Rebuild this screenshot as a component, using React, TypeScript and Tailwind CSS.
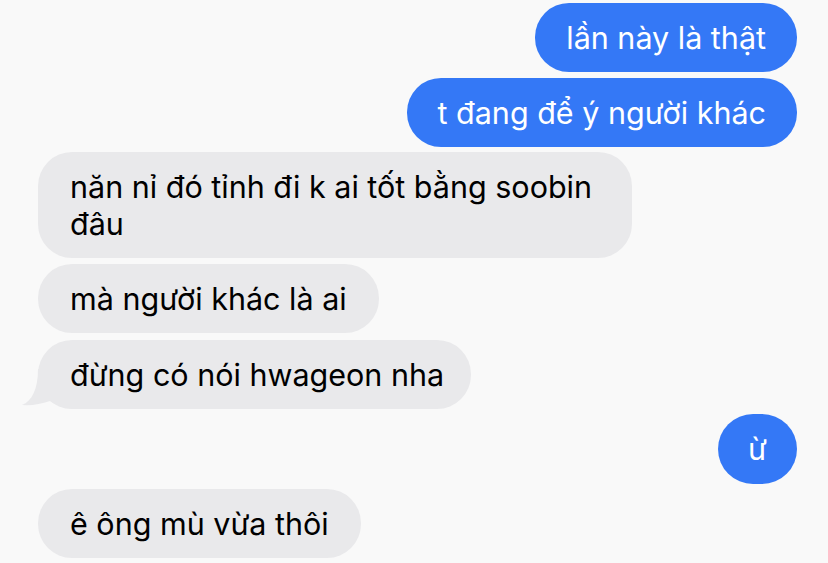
import React from "react";

const Sent = ({ text, className = "" }: { text: string; className?: string }) => (
  <div
    className={`self-end rounded-[34px] bg-[#3478f6] px-[31px] py-4 text-[30.5px] leading-[37px] text-white ${className}`}
  >
    {text}
  </div>
);

const Received = ({
  children,
  tail = false,
  className = "",
  pad = "pr-8",
}: {
  children: React.ReactNode;
  tail?: boolean;
  className?: string;
  pad?: string;
}) => (
  <div
    className={`relative self-start rounded-[34px] bg-[#e9e9eb] pl-8 ${pad} py-4 text-[30.5px] leading-[37px] text-black ${className}`}
  >
    {tail && (
      <svg
        className="absolute bottom-0 left-[-18px]"
        width="56"
        height="40"
        viewBox="0 0 56 40"
      >
        <path
          d="M18 0 C18 20 12 32 2 36 Q16 37 30 32 C36 36 44 39 56 40 L56 0 Z"
          fill="#e9e9eb"
        />
      </svg>
    )}
    <span className="relative">{children}</span>
  </div>
);

export default function App() {
  return (
    <div
      className="flex h-[563px] w-[828px] flex-col overflow-hidden bg-[#f9f9f9] pl-[38px] pr-[31px] pt-[3px]"
      style={{ fontFamily: "Inter, 'Noto Sans', sans-serif" }}
    >
      <Sent text="lần này là thật" />
      <Sent text="t đang để ý người khác" className="mt-[6px]" />
      <Received className="mt-[5px]" pad="pr-[40px]">
        năn nỉ đó tỉnh đi k ai tốt bằng soobin
        <br />
        đâu
      </Received>
      <Received className="mt-[6px]">mà người khác là ai</Received>
      <Received tail className="mt-[7px]" pad="pr-[27px]">
        đừng có nói hwageon nha
      </Received>
      <div className="mt-[5px] flex h-[70px] w-[79px] items-center justify-center self-end rounded-full bg-[#3478f6] text-[30.5px] text-white">
        ừ
      </div>
      <Received className="mt-[5px]">ê ông mù vừa thôi</Received>
    </div>
  );
}
